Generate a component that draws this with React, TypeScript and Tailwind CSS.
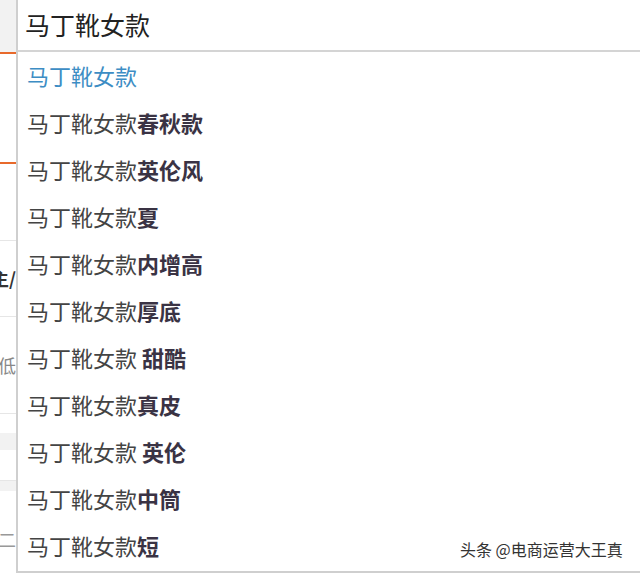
const suggestions: { base: string; extra: string }[] = [
  { base: '马丁靴女款', extra: '春秋款' },
  { base: '马丁靴女款', extra: '英伦风' },
  { base: '马丁靴女款', extra: '夏' },
  { base: '马丁靴女款', extra: '内增高' },
  { base: '马丁靴女款', extra: '厚底' },
  { base: '马丁靴女款 ', extra: '甜酷' },
  { base: '马丁靴女款', extra: '真皮' },
  { base: '马丁靴女款 ', extra: '英伦' },
  { base: '马丁靴女款', extra: '中筒' },
  { base: '马丁靴女款', extra: '短' },
]

function PageEdge() {
  return (
    <div className="flex w-[16px] shrink-0 flex-col overflow-hidden bg-white">
      <div className="h-[52px] bg-[#f2f2f2]" />
      <div className="h-[2px] bg-[#e8692b]" />
      <div className="h-[108px]" />
      <div className="h-[2px] bg-[#e8692b]" />
      <div className="h-[76px]" />
      <div className="h-px bg-[#e6e6e6]" />
      <div className="flex h-[75px] items-center justify-end whitespace-nowrap text-[18px] font-bold text-[#333]">
        主/
      </div>
      <div className="h-px bg-[#e6e6e6]" />
      <div className="flex h-[96px] items-center justify-end whitespace-nowrap text-[18px] text-[#888]">
        低
      </div>
      <div className="h-px bg-[#e6e6e6]" />
      <div className="h-[19px]" />
      <div className="h-[17px] bg-[#f2f2f2]" />
      <div className="h-[30px]" />
      <div className="h-px bg-[#e6e6e6]" />
      <div className="h-[10px] bg-[#f2f2f2]" />
      <div className="h-[33px]" />
      <div className="flex h-[30px] items-center justify-end whitespace-nowrap text-[18px] text-[#999]">
        刂 二
      </div>
    </div>
  )
}

export default function App() {
  return (
    <div
      className="relative flex h-[574px] w-[640px] overflow-hidden bg-white"
      style={{ fontFamily: '"Noto Sans CJK SC", "Noto Sans", sans-serif' }}
    >
      <PageEdge />

      <div className="flex h-[573px] flex-1 flex-col border-b-2 border-l-2 border-[#cfcfcf]">
        <div className="flex h-[52px] shrink-0 items-center border-b-2 border-[#d4d4d4] pl-[7px] text-[25px] text-[#222]">
          马丁靴女款
        </div>

        <ul className="flex flex-col">
          <li className="flex h-[47px] items-center pl-[9px] text-[22px] text-[#3d8dc4]">马丁靴女款</li>
          {suggestions.map((s, i) => (
            <li key={i} className="flex h-[47px] items-center whitespace-pre pl-[9px] text-[22px] text-[#444]">
              {s.base}
              <b className="font-bold text-[#3a3344]">{s.extra}</b>
            </li>
          ))}
        </ul>
      </div>

      <div className="absolute bottom-[13px] left-[460px] text-[16px] text-[#333] [text-shadow:0_0_2px_#fff]">
        头条 @电商运营大王真
      </div>
    </div>
  )
}
